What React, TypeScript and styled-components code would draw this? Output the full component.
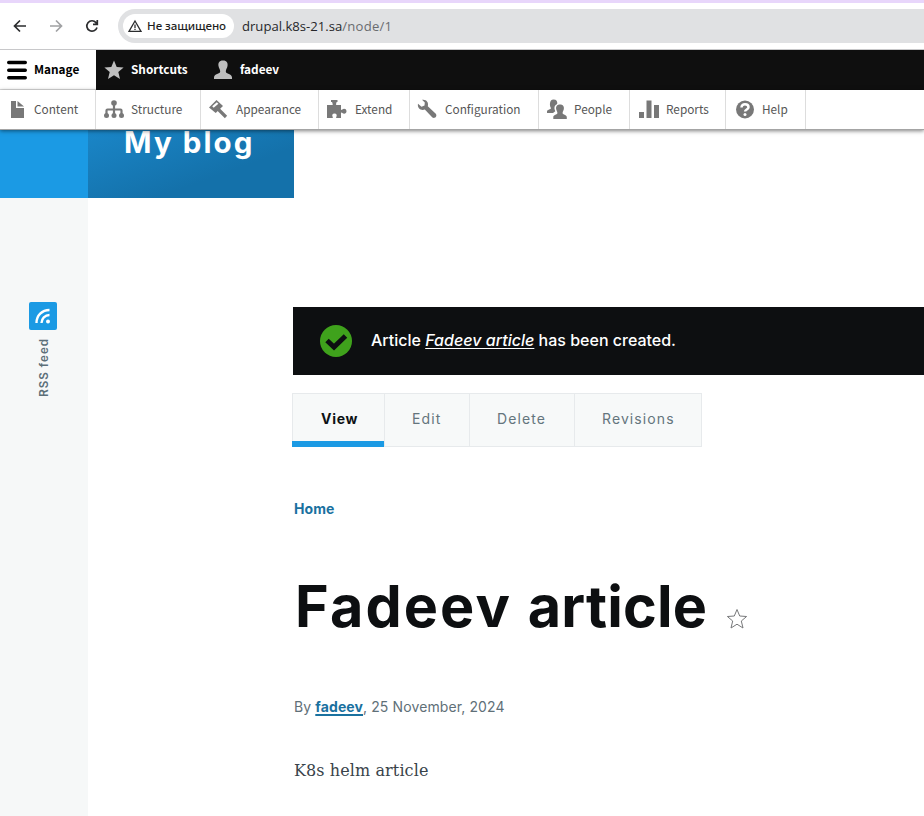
import React from 'react';
import styled, { createGlobalStyle } from 'styled-components';

const Global = createGlobalStyle`
  * { box-sizing: border-box; }
  html, body { margin: 0; padding: 0; background: #fff; overflow: hidden; }
  body { font-family: Inter, sans-serif; }
  svg { display: block; flex: none; }
`;

const Window = styled.div`
  width: 924px;
  height: 816px;
  overflow: hidden;
  display: flex;
  flex-direction: column;
`;

/* Browser chrome */
const TabEdge = styled.div`
  height: 8px;
  flex: none;
  background: linear-gradient(#e8d6fb 0 3px, transparent 3px);
`;
const BrowserBar = styled.div`
  height: 42px;
  flex: none;
  display: flex;
  align-items: flex-start;
  padding: 1px 0 0 12px;
  border-bottom: 1px solid #c8c8ca;
`;
const NavIcons = styled.div`
  display: flex;
  gap: 20px;
  height: 34px;
  align-items: center;
  width: 106px;
`;
const AddressBar = styled.div`
  flex: 1;
  height: 34px;
  background: #e0e1e3;
  border-radius: 17px 0 0 17px;
  display: flex;
  align-items: center;
  padding-left: 5px;
  font-family: "Open Sans", sans-serif;
`;
const Security = styled.div`
  width: 111px;
  height: 24px;
  border-radius: 12px;
  background: #fff;
  display: flex;
  align-items: center;
  gap: 5px;
  padding: 0 0 1px 5px;
  font: 500 11.6px "Noto Sans", sans-serif;
  letter-spacing: -0.08px;
  color: #1f1f1f;
  white-space: nowrap;
`;
const Url = styled.div`
  margin-left: 8px;
  font-size: 13.1px;
  color: #26272a;
  white-space: nowrap;
`;
const UrlPath = styled.span`
  color: #696b6f;
  letter-spacing: 0.25px;
`;

/* Admin toolbar */
const AdminBar = styled.nav`
  height: 40px;
  flex: none;
  display: flex;
  background: #0f0f0f;
  font: 700 11.8px "Noto Sans CJK JP", sans-serif;
`;
const AdminTab = styled.div<{ $width: number; $active?: boolean; $pad: number; $gap: number }>`
  width: ${p => p.$width}px;
  display: flex;
  align-items: center;
  gap: ${p => p.$gap}px;
  padding-left: ${p => p.$pad}px;
  padding-bottom: ${p => (p.$active ? 0 : 1)}px;
  background: ${p => (p.$active ? '#fff' : 'transparent')};
  color: ${p => (p.$active ? '#000' : '#fff')};
  border-bottom: ${p => (p.$active ? '1px solid #ddd' : 'none')};
`;
const Label = styled.span`
  padding-bottom: 2px;
`;
const Tray = styled.nav`
  height: 40px;
  flex: none;
  display: flex;
  background: #fff;
  border-bottom: 1px solid #a4a4a4;
  box-shadow: 0 1px 4px rgba(0, 0, 0, 0.5);
  position: relative;
  z-index: 1;
  font: 400 11.8px "Noto Sans CJK JP", sans-serif;
`;
const TrayItem = styled.div<{ $width: number; $text: number }>`
  width: ${p => p.$width}px;
  display: grid;
  grid-template-columns: ${p => p.$text}px 1fr;
  align-items: center;
  border-right: 1px solid #ddd;
  color: #565656;
  white-space: nowrap;
  svg { margin: -1px 0 0 6px; }
`;

/* Site */
const Site = styled.div`
  flex: 1;
  display: grid;
  grid-template-columns: 88px 1fr;
  min-height: 0;
`;
const Sidebar = styled.aside`
  background: #f6f8f8;
  display: flex;
  flex-direction: column;
  align-items: center;
`;
const SidebarTop = styled.div`
  width: 88px;
  height: 68px;
  background: #1b9ae4;
  margin-bottom: 104px;
`;
const RssIcon = styled.div`
  width: 28px;
  height: 28px;
  border-radius: 2px;
  background: #1b9ae4;
  margin-right: 2px;
`;
const RssText = styled.div`
  writing-mode: vertical-rl;
  transform: rotate(180deg);
  margin: 8px 1px 0 0;
  font-size: 11.5px;
  font-weight: 600;
  letter-spacing: 1.05px;
  line-height: 16px;
  color: #5c6f78;
`;
const Main = styled.main`
  display: flex;
  flex-direction: column;
  align-items: flex-start;
`;
const Brand = styled.div`
  width: 206px;
  height: 68px;
  padding-left: 36px;
  background: linear-gradient(160deg, #1a86c8 0%, #1471aa 65%);
  color: #fff;
  font-size: 29.5px;
  font-weight: 700;
  letter-spacing: 2.1px;
  line-height: 24px;
  white-space: nowrap;
`;
const Content = styled.div`
  margin-left: 204px;
  width: 632px;
  display: flex;
  flex-direction: column;
  align-items: flex-start;
`;
const Message = styled.div`
  margin: 109px 0 0 1px;
  width: 631px;
  height: 68px;
  padding-left: 27px;
  display: flex;
  align-items: center;
  gap: 19px;
  background: #0d0f11;
  color: #fff;
  font-size: 16px;
  font-weight: 500;
  white-space: nowrap;
`;
const MessageText = styled.div`
  padding-bottom: 2px;
  em {
    letter-spacing: 0.02px;
    text-decoration: underline;
    text-underline-offset: 2px;
    text-decoration-skip-ink: none;
  }
`;
const Tabs = styled.div`
  margin-top: 18px;
  height: 54px;
  display: flex;
  border: 1px solid #e7eaec;
  background: #f7f9f9;
`;
const Tab = styled.div<{ $width: number; $active?: boolean }>`
  width: ${p => p.$width}px;
  height: 54px;
  margin: ${p => (p.$active ? '-1px 0 0 -1px' : '-1px 0 0 0')};
  padding: ${p => (p.$active ? '3px 0 0 29px' : '0 0 3px 27px')};
  display: flex;
  align-items: center;
  font-size: 14px;
  font-weight: ${p => (p.$active ? 700 : 400)};
  letter-spacing: ${p => (p.$active ? 0.7 : 1.1)}px;
  color: ${p => (p.$active ? '#0d1214' : '#64757d')};
  border-bottom: ${p => (p.$active ? '6px solid #1b9ae4' : 'none')};
  & + & { border-left: 1px solid #e7eaec; }
  &:nth-child(2) { margin-left: -1px; }
`;
const Crumb = styled.a`
  margin: 53px 0 0 2px;
  font-size: 14px;
  font-weight: 700;
  line-height: 18px;
  letter-spacing: 0.1px;
  color: #1a719f;
`;
const TitleRow = styled.div`
  margin: 55px 0 0 3px;
  height: 68px;
  display: flex;
  align-items: flex-start;
`;
const Title = styled.h1`
  margin: 0;
  width: 432px;
  font-size: 57.5px;
  font-weight: 700;
  line-height: 67px;
  color: #0d0f11;
  white-space: nowrap;
`;
const Word = styled.span<{ $spacing: number }>`
  letter-spacing: ${p => p.$spacing}px;
`;
const StarSlot = styled.div`
  padding-top: 36px;
`;
const Byline = styled.div`
  margin: 56px 0 0 2px;
  font-size: 14px;
  line-height: 20px;
  letter-spacing: 0.11px;
  color: #5f7078;
  white-space: pre;
  a {
    font-weight: 700;
    color: #1a719f;
    text-decoration: underline;
    text-underline-offset: 2px;
    text-decoration-thickness: 2px;
  }
`;
const Body = styled.p`
  margin: 41px 0 0 2px;
  font: 400 16px/25px "DejaVu Serif", serif;
  letter-spacing: 0.1px;
  color: #39434a;
`;

const STAR = 'M10 0.5 L12.7 7 L19.6 7.5 L14.3 12 L16 19 L10 15.2 L4 19 L5.7 12 L0.4 7.5 L7.3 7Z';
const GREY = '#787878';

const ContentIcon = () => (
  <svg width="20" height="20" fill={GREY}><path d="M5 2h5v7h8v10H5z" /><path d="M11.500 2 18 7.600h-6.500z" /></svg>
);
const StructureIcon = () => (
  <svg width="24" height="20" fill={GREY} stroke={GREY}>
    <path d="M12 4v13M4.500 17v-5.500q0-1 1-1h13q1 0 1 1V17" fill="none" strokeWidth="2.200" />
    <g stroke="none"><circle cx="12" cy="4" r="2.800" /><circle cx="4.500" cy="16.500" r="2.500" /><circle cx="12" cy="16.500" r="2.500" /><circle cx="19.500" cy="16.500" r="2.500" /></g>
  </svg>
);
const AppearanceIcon = () => (
  <svg width="22" height="20" fill="none">
    <path d="M2 8.500 9.500 1 16 7 8.700 14z" fill={GREY} />
    <path d="m5.200 7.300 4.600-4.100 1.600 1.500-4.700 4z" fill="#fff" />
    <path d="m11.500 10.500 7.500 7.500" stroke={GREY} strokeWidth="3.200" />
  </svg>
);
const ExtendIcon = () => (
  <svg width="23" height="20" fill={GREY}>
    <path d="M2 6h5.200c.9 0 .7-.8.3-1.500C6.700 3 7.200 1 9.300 1s2.800 2 1.900 3.500c-.4.7-.4 1.500.5 1.500H16v4.200c0 .9.7.8 1.300.3 1.600-1.300 4.200-.6 4.200 1.800s-2.600 3-4.200 1.600c-.6-.5-1.300-.4-1.300.5V19h-4.300c-.8 0-.7-.7-.3-1.300.8-1.500.2-3.200-1.900-3.200s-2.700 1.700-1.900 3.200c.4.6.4 1.300-.4 1.300H2z" />
    <path d="M6 1h6.500v2H6z" />
  </svg>
);
const WrenchIcon = () => (
  <svg width="22" height="20" fill={GREY}>
    <path d="M6 0.800C10 0 13 3 11.800 7.300l8 7.500c1.700 2.500-.8 5.200-3.400 3.800L8.800 10.500C5 12 1 9 2 4.700l3.500 3.100 3-1.300.3-3z" />
  </svg>
);
const PeopleIcon = () => (
  <svg width="23" height="21" fill={GREY}>
    <path d="M8.500 0.500c3 0 4.200 2 3.700 4.500-2.400.8-3.300 3.200-2.500 5.800l.6 1.500-2.300 1.700H2v-1.500c0-2 4-2 4-3.500C4.500 7.500 4 .5 8.500.5z" />
    <path d="M15 5.500c3.300 0 4.300 2.200 3.800 4.800-.3 1.600-1.200 2.300-1.200 3.700 0 2 4.200 1.500 4.200 4.200V20h-13.500v-1.800c0-2.700 4.100-2.200 4.100-4.200 0-1.400-.9-2.100-1.200-3.700-.5-2.600.500-4.800 3.800-4.800z" />
  </svg>
);
const ReportsIcon = () => (
  <svg width="23" height="20" fill={GREY}><path d="M3 13h5v6H3zM10.500 1.500h5V19h-5zM18 6h5v13h-5z" /></svg>
);
const HelpIcon = () => (
  <svg width="22" height="20">
    <circle cx="13" cy="10.500" r="9" fill={GREY} />
    <path d="M9.500 8.500c0-4.500 7-4 7-.3 0 2.300-3.400 2.300-3.400 4.400" fill="none" stroke="#fff" strokeWidth="2.500" />
    <circle cx="13" cy="15.600" r="1.500" fill="#fff" />
  </svg>
);

const TRAY: [string, number, number, React.FC][] = [
  ['Content', 96, 34, ContentIcon],
  ['Structure', 105, 35, StructureIcon],
  ['Appearance', 118, 35, AppearanceIcon],
  ['Extend', 91, 36, ExtendIcon],
  ['Configuration', 129, 35, WrenchIcon],
  ['People', 91, 35, PeopleIcon],
  ['Reports', 96, 36, ReportsIcon],
  ['Help', 80, 36, HelpIcon],
];

export default function App() {
  return (
    <Window>
      <Global />
      <TabEdge />
      <BrowserBar>
        <NavIcons>
          <svg width="16" height="16" fill="none" stroke="#2b2c2e" strokeWidth="1.700"><path d="M14 8H3M8 2.500 2.500 8 8 13.500" /></svg>
          <svg width="16" height="16" fill="none" stroke="#a0a1a3" strokeWidth="1.700"><path d="M2 8h11M8 2.500 13.500 8 8 13.500" /></svg>
          <svg width="16" height="16" fill="none" stroke="#2b2c2e" strokeWidth="1.700"><path d="M13 9.500A5.200 5.200 0 1 1 12 4.600L13.300 6M13.300 2v4.300H9" /></svg>
        </NavIcons>
        <AddressBar>
          <Security>
            <svg width="14" height="14" fill="none" stroke="#2b2c2e" strokeWidth="1.300"><path d="M7 2 13 12.300H1ZM7 5.500v3.500M7 9.800v1.300" /></svg>
            Не защищено
          </Security>
          <Url>drupal.k8s-21.sa<UrlPath>/node/1</UrlPath></Url>
        </AddressBar>
      </BrowserBar>
      <AdminBar>
        <AdminTab $width={96} $pad={7} $gap={7} $active>
          <svg width="20" height="20" stroke="#000" strokeWidth="3.400" strokeLinecap="round"><path d="M1.700 2.500h16.600M1.700 10.200h16.600M1.700 17.800h16.600" /></svg>
          <Label>Manage</Label>
        </AdminTab>
        <AdminTab $width={108} $pad={8} $gap={7}>
          <svg width="20" height="20" fill="#bebebe"><path d={STAR} /></svg>
          <Label>Shortcuts</Label>
        </AdminTab>
        <AdminTab $width={100} $pad={9} $gap={7}>
          <svg width="20" height="20" fill="#bebebe"><path d="M10 .5c4 0 5 2.500 4.500 5.500-.3 2-1.700 3.500-1.700 5.500 0 2.800 6.200 2 6.200 6V19H1v-1.500c0-4 6.200-3.200 6.200-6 0-2-1.400-3.500-1.700-5.500C5 3 6 .5 10 .5z" /></svg>
          <Label>fadeev</Label>
        </AdminTab>
      </AdminBar>
      <Tray>
        {TRAY.map(([label, width, text, Icon]) => (
          <TrayItem key={label} $width={width} $text={text}><Icon /><Label>{label}</Label></TrayItem>
        ))}
      </Tray>
      <Site>
        <Sidebar>
          <SidebarTop />
          <RssIcon>
            <svg width="28" height="28" fill="none" stroke="#fff" strokeWidth="2.400">
              <path d="M7.500 21C7.500 13.500 13 8 20.500 8M12.500 21c0-4.500 3.500-8 8-8" /><circle cx="19" cy="19.500" r="2" fill="#fff" stroke="none" />
            </svg>
          </RssIcon>
          <RssText>RSS feed</RssText>
        </Sidebar>
        <Main>
          <Brand>My blog</Brand>
          <Content>
            <Message>
              <svg width="32" height="32"><circle cx="16" cy="16" r="16" fill="#3fa21c" /><path d="m7 15.500 7 6.500L25.500 11" fill="none" stroke="#0d0f11" strokeWidth="5" /></svg>
              <MessageText>Article <em>Fadeev article</em> has been created.</MessageText>
            </Message>
            <Tabs>
              <Tab $width={93} $active>View</Tab>
              <Tab $width={85}>Edit</Tab>
              <Tab $width={105}>Delete</Tab>
              <Tab $width={127}>Revisions</Tab>
            </Tabs>
            <Crumb>Home</Crumb>
            <TitleRow>
              <Title><Word $spacing={2.1}>Fadeev </Word><Word $spacing={0.2}>article</Word></Title>
              <StarSlot>
                <svg width="20" height="20" fill="none" stroke="#77787a" strokeWidth="1"><path d={STAR} /></svg>
              </StarSlot>
            </TitleRow>
            <Byline>By <a>fadeev</a>, 25 November, 2024</Byline>
            <Body>K8s helm article</Body>
          </Content>
        </Main>
      </Site>
    </Window>
  );
}
